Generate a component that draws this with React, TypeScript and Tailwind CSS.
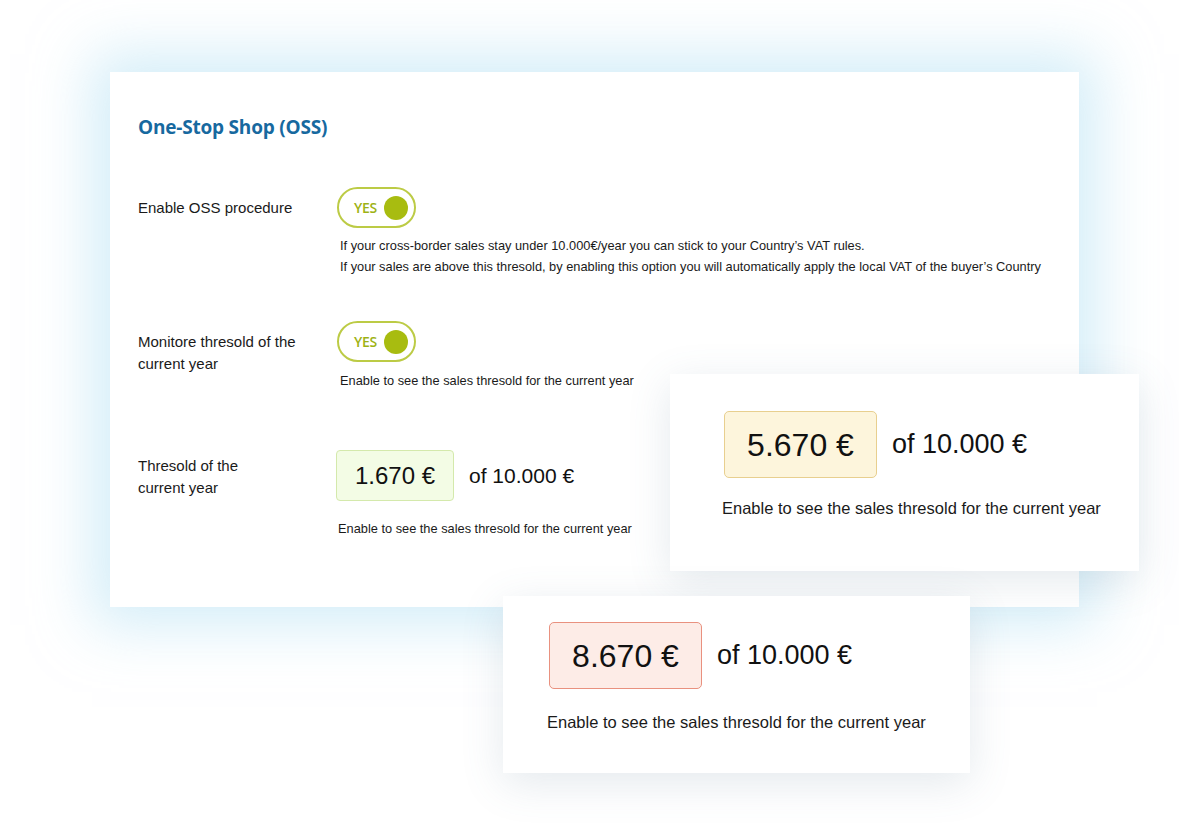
import React from 'react';

const sans = "font-['Liberation_Sans',Arial,sans-serif]";

const Toggle = () => (
  <div className="w-[79px] h-[41px] rounded-full border-2 border-[#bccb45] flex items-center justify-end pr-[6px] gap-[7px] bg-white">
    <span className="font-['Open_Sans',sans-serif] font-semibold text-[14px] text-[#9db214] tracking-[-0.3px]">YES</span>
    <span className="w-[24px] h-[24px] rounded-full bg-[#a8bc10]" />
  </div>
);

type AmountProps = {
  value: string;
  box: string;
  boxSize: string;
  valueSize: string;
  ofSize: string;
};

const Amount = ({ value, box, boxSize, valueSize, ofSize }: AmountProps) => (
  <div className={`flex items-center gap-[15px] ${sans} text-[#111]`}>
    <div className={`${boxSize} ${box} ${valueSize} border flex items-center justify-center`}>{value}</div>
    <span className={ofSize}>of 10.000 €</span>
  </div>
);

const FloatCard = ({
  className,
  children,
}: {
  className: string;
  children: React.ReactNode;
}) => (
  <div className={`absolute bg-white shadow-[0_10px_40px_rgba(90,120,140,0.16)] ${className}`}>{children}</div>
);

export default function App() {
  return (
    <div className="relative w-[1200px] h-[838px] overflow-hidden bg-white">
      {/* main settings panel */}
      <div className="ml-[110px] mt-[72px] w-[969px] h-[535px] bg-white shadow-[0_0_55px_18px_rgba(175,222,242,0.55)] pl-[28px] pt-[43px]">
        <h2 className="font-['Open_Sans',sans-serif] font-bold text-[19px] leading-[24px] text-[#17699f] tracking-[-0.2px]">
          One-Stop Shop (OSS)
        </h2>

        {/* row 1 */}
        <div className={`flex mt-[48px] ${sans} text-[#1a1a1a]`}>
          <div className="w-[199px] pt-[10px] text-[15px] leading-[22px]">Enable OSS procedure</div>
          <div className="flex flex-col">
            <Toggle />
            <div className="mt-[7px] ml-[3px] text-[12.8px] leading-[21px]">
              <p>If your cross-border sales stay under 10.000€/year you can stick to your Country’s VAT rules.</p>
              <p>If your sales are above this thresold, by enabling this option you will automatically apply the local VAT of the buyer’s Country</p>
            </div>
          </div>
        </div>

        {/* row 2 */}
        <div className={`flex mt-[44px] ${sans} text-[#1a1a1a]`}>
          <div className="w-[199px] pt-[10px] text-[15px] leading-[22px]">
            Monitore thresold of the
            <br />
            current year
          </div>
          <div className="flex flex-col">
            <Toggle />
            <p className="mt-[8px] ml-[3px] text-[12.8px] leading-[21px]">Enable to see the sales thresold for the current year</p>
          </div>
        </div>

        {/* row 3 */}
        <div className={`flex mt-[59px] ${sans} text-[#1a1a1a]`}>
          <div className="w-[199px] pt-[5px] text-[15px] leading-[22px]">
            Thresold of the
            <br />
            current year
          </div>
          <div className="flex flex-col -ml-[1px]">
            <Amount
              value="1.670 €"
              box="bg-[#f3fce5] border-[#d4e9ac] rounded-[4px]"
              boxSize="w-[118px] h-[51px]"
              valueSize="text-[24px]"
              ofSize="text-[21px]"
            />
            <p className="mt-[17px] ml-[2px] text-[12.8px] leading-[21px]">Enable to see the sales thresold for the current year</p>
          </div>
        </div>
      </div>

      <FloatCard className="left-[670px] top-[374px] w-[469px] h-[197px] pl-[54px] pt-[37px]">
        <Amount
          value="5.670 €"
          box="bg-[#fdf5dc] border-[#e8cf8f] rounded-[5px]"
          boxSize="w-[153px] h-[67px]"
          valueSize="text-[32px]"
          ofSize="text-[27px]"
        />
        <p className={`mt-[18px] -ml-[2px] ${sans} text-[16.5px] leading-[24px] text-[#1a1a1a]`}>
          Enable to see the sales thresold for the current year
        </p>
      </FloatCard>

      <FloatCard className="left-[503px] top-[596px] w-[467px] h-[177px] pl-[46px] pt-[26px]">
        <Amount
          value="8.670 €"
          box="bg-[#fdece7] border-[#e9917f] rounded-[5px]"
          boxSize="w-[153px] h-[67px]"
          valueSize="text-[32px]"
          ofSize="text-[27px]"
        />
        <p className={`mt-[21px] -ml-[2px] ${sans} text-[16.5px] leading-[24px] text-[#1a1a1a]`}>
          Enable to see the sales thresold for the current year
        </p>
      </FloatCard>
    </div>
  );
}
